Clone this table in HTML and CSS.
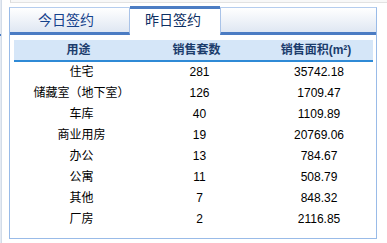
FILE: index.html
```html
<!DOCTYPE html>
<html lang="zh-CN">
<head>
<meta charset="utf-8">
<title>签约统计</title>
<link rel="stylesheet" href="styles.css">
</head>
<body>
<div class="page">
  <div class="edge"><div class="edge-mark"></div></div>
  <div class="main">
    <div class="topline"></div>
    <div class="box">
      <div class="tabs">
        <div class="tab">今日签约</div>
        <div class="tab active">昨日签约</div>
        <div class="tab-fill"></div>
      </div>
      <div class="table">
        <div class="row head">
          <div class="cell">用途</div>
          <div class="cell">销售套数</div>
          <div class="cell">销售面积(m²)</div>
        </div>
        <div class="row"><div class="cell">住宅</div><div class="cell">281</div><div class="cell">35742.18</div></div>
        <div class="row"><div class="cell">储藏室（地下室）</div><div class="cell">126</div><div class="cell">1709.47</div></div>
        <div class="row"><div class="cell">车库</div><div class="cell">40</div><div class="cell">1109.89</div></div>
        <div class="row"><div class="cell">商业用房</div><div class="cell">19</div><div class="cell">20769.06</div></div>
        <div class="row"><div class="cell">办公</div><div class="cell">13</div><div class="cell">784.67</div></div>
        <div class="row"><div class="cell">公寓</div><div class="cell">11</div><div class="cell">508.79</div></div>
        <div class="row"><div class="cell">其他</div><div class="cell">7</div><div class="cell">848.32</div></div>
        <div class="row"><div class="cell">厂房</div><div class="cell">2</div><div class="cell">2116.85</div></div>
      </div>
    </div>
  </div>
</div>
</body>
</html>
```

FILE: styles.css
```css
html, body {
  margin: 0;
  padding: 0;
  background: #ffffff;
}
body {
  font-family: "Liberation Sans", "Noto Sans CJK SC", sans-serif;
  font-size: 12px;
  color: #000;
}
.page {
  display: flex;
  width: 387px;
  height: 243px;
  overflow: hidden;
}
.edge {
  width: 2px;
  margin-right: 8px;
  background: #e4eaf3;
  border-right: 1px solid #d3dce8;
  padding-top: 34px;
  box-sizing: border-box;
}
.edge-mark {
  height: 2px;
  background: #4a7cc4;
}
.main {
  flex: 1;
  display: flex;
  flex-direction: column;
  margin-left: -1px;
}
.topline {
  height: 2px;
  margin-left: 1px;
  border-left: 1px solid #dcdcdc;
  border-bottom: 1px solid #e2e2e2;
  background: #f8f8f8;
  margin-bottom: 4px;
}
.box {
  width: 368px;
  height: 232px;
  box-sizing: border-box;
  border: 1px solid #99bbe8;
  border-top-color: #b5cdee;
  display: flex;
  flex-direction: column;
}
.tabs {
  display: flex;
  height: 27px;
}
.tab {
  width: 120px;
  box-sizing: border-box;
  background: linear-gradient(#ffffff, #dfe7f3);
  border-right: 1px solid #a9c3e8;
  border-bottom: 3px solid #4b7cc3;
  font-size: 14px;
  color: #15428b;
  line-height: 24px;
  padding-left: 28px;
}
.tab.active {
  width: 90px;
  background: #ffffff;
  border-right: none;
  border-bottom: none;
  border-top: 3px solid #4b7cc3;
  margin-top: -2px;
  height: 29px;
  line-height: 22px;
  padding-left: 15px;
  color: #0d2f63;
}
.tab-fill {
  flex: 1;
  background: linear-gradient(#ffffff, #dfe7f3);
  border-left: 1px solid #a9c3e8;
  border-bottom: 3px solid #4b7cc3;
}
.table {
  padding: 5px 3px 0 4px;
}
.row {
  display: grid;
  grid-template-columns: 120px 116px 123px;
  height: 21px;
  line-height: 21px;
}
.row .cell {
  text-align: center;
  padding-left: 15px;
  white-space: nowrap;
}
.row.head {
  height: 20px;
  line-height: 20px;
  background: #d5e6f8;
  border-bottom: 2px solid #2f8ad6;
  font-weight: bold;
  color: #1b3c6c;
  font-size: 12px;
}
.row.head .cell {
  padding-left: 9px;
}
```
